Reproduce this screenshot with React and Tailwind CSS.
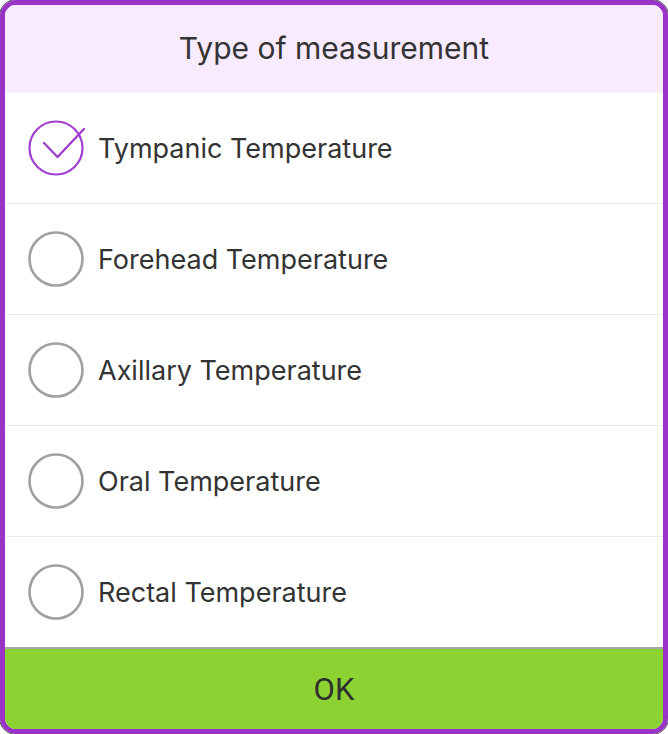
import React, { useState } from 'react';

const options = [
  'Tympanic Temperature',
  'Forehead Temperature',
  'Axillary Temperature',
  'Oral Temperature',
  'Rectal Temperature',
];

const RadioMark = ({ checked }) =>
  checked ? (
    <svg width="56" height="56" viewBox="0 0 56 56" className="overflow-visible shrink-0">
      <circle cx="28" cy="28" r="26.5" fill="none" stroke="#a03fd0" strokeWidth="2.2" />
      <path d="M16 23 L29.5 37 L56 9" fill="none" stroke="#a03fd0" strokeWidth="2.4" strokeLinecap="round" strokeLinejoin="round" />
    </svg>
  ) : (
    <svg width="56" height="56" viewBox="0 0 56 56" className="shrink-0">
      <circle cx="28" cy="28" r="26.5" fill="none" stroke="#a0a0a0" strokeWidth="2.6" />
    </svg>
  );

export default function App() {
  const [selected, setSelected] = useState(0);

  return (
    <div className="w-[668px] h-[734px] bg-white overflow-hidden" style={{ fontFamily: 'Inter, "Liberation Sans", sans-serif' }}>
      <div className="w-full h-full flex flex-col rounded-[16px] border-[5px] border-[#9a34c9] outline outline-1 outline-[#555] overflow-hidden">
        {/* Header */}
        <div className="h-[88px] shrink-0 bg-[#f8ebfd] flex items-center justify-center pb-[2px]">
          <h1 className="text-[30px] text-[#333] leading-none">Type of measurement</h1>
        </div>

        {/* Options */}
        <div className="flex flex-col bg-white">
          {options.map((label, i) => (
            <button
              key={label}
              onClick={() => setSelected(i)}
              className={`flex items-center gap-[14px] pl-[23px] text-left ${
                i < options.length - 1 ? 'h-[111px] border-b border-[#ececec]' : 'h-[110px]'
              }`}
            >
              <RadioMark checked={selected === i} />
              <span className="text-[27px] text-[#333] leading-none">{label}</span>
            </button>
          ))}
        </div>

        {/* OK button */}
        <button className="flex-1 border-t-2 border-[#a6a6a6] bg-[#8dd233] flex items-center justify-center">
          <span className="text-[31px] text-[#2f2f2f] leading-none" style={{ fontFamily: 'Roboto, "Liberation Sans", sans-serif' }}>OK</span>
        </button>
      </div>
    </div>
  );
}
